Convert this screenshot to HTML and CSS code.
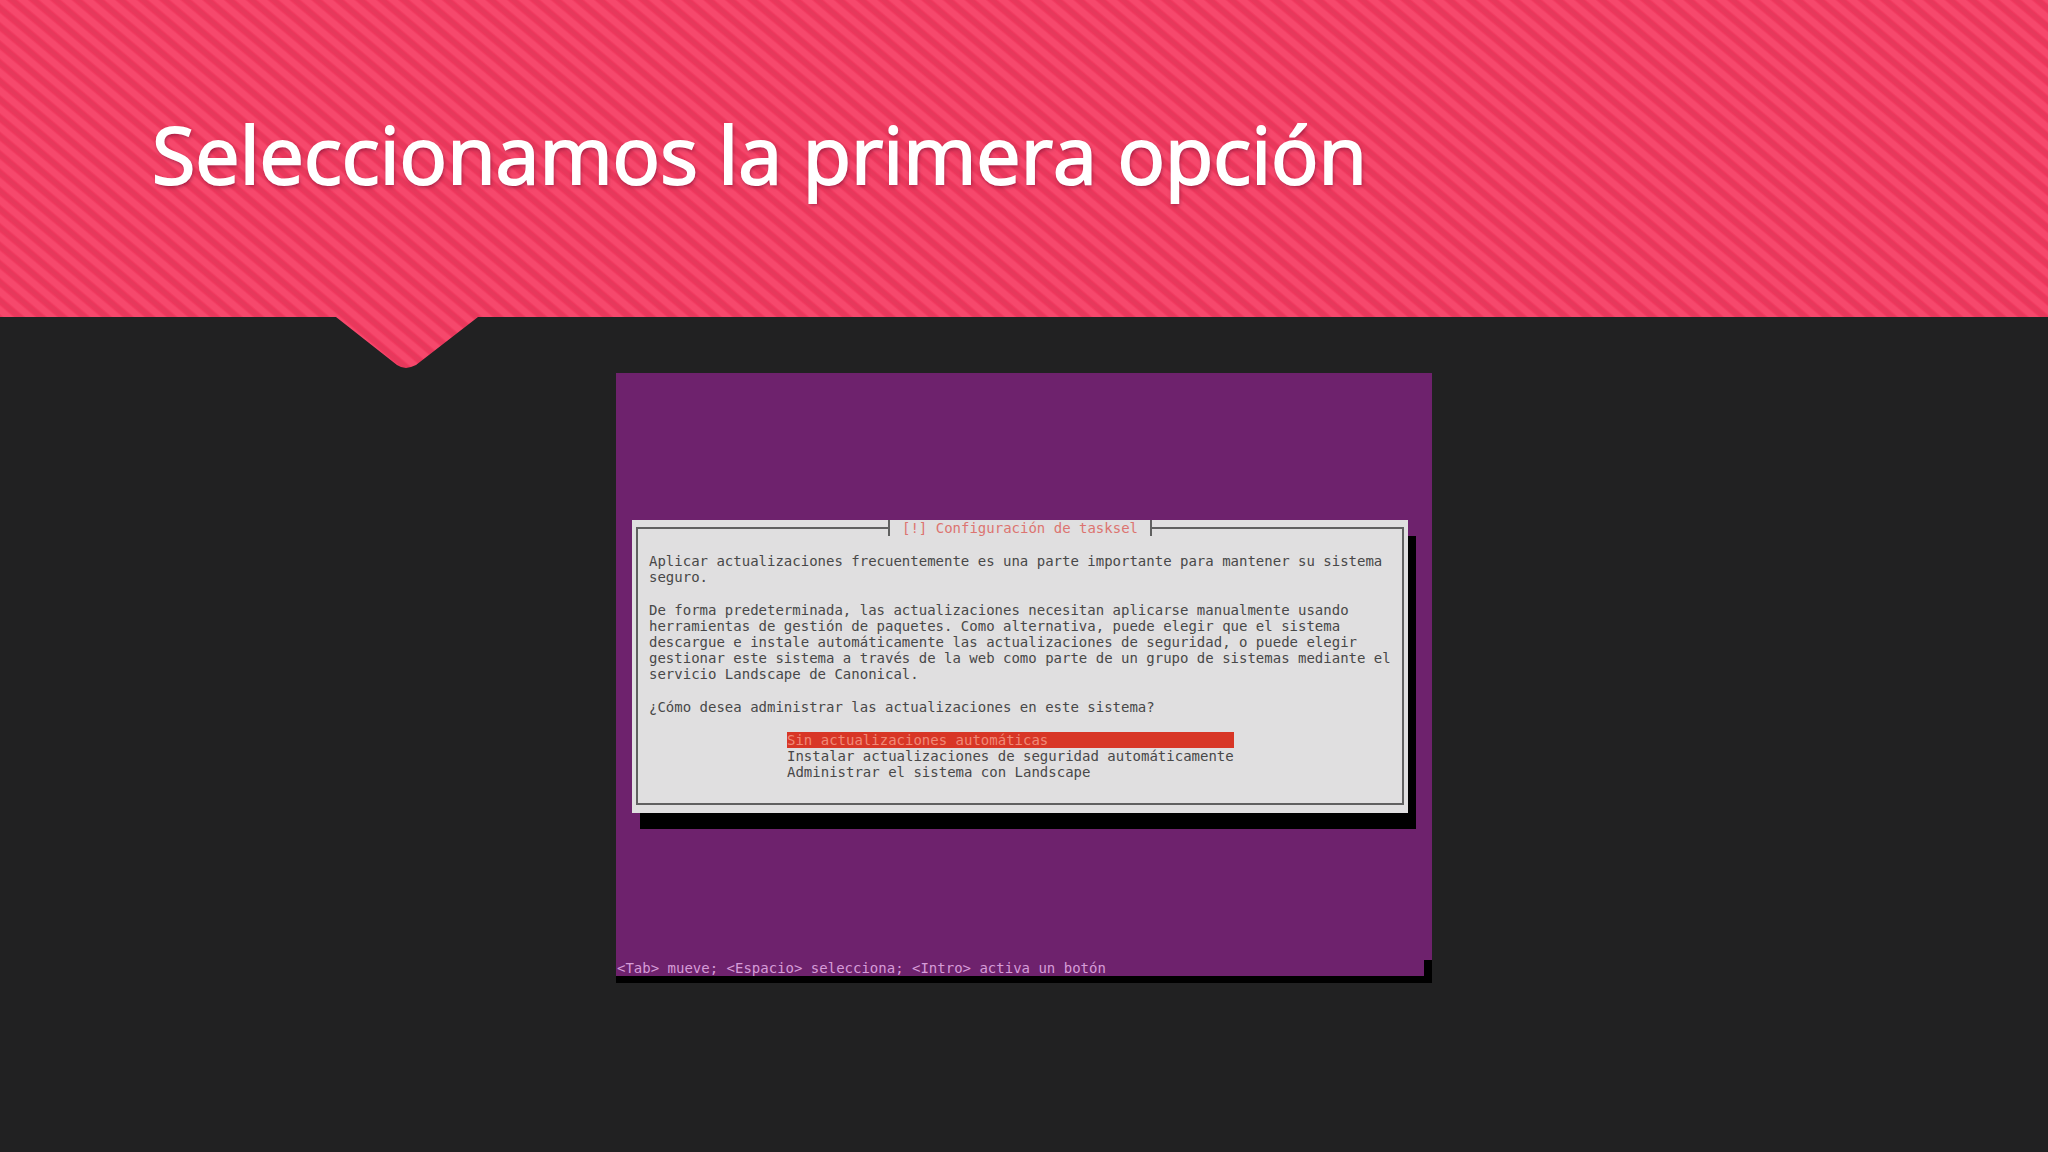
FILE: index.html
```html
<!DOCTYPE html>
<html lang="es">
<head>
  <title>Seleccionamos la primera opción</title>
  <meta charset="utf-8">
  <meta name="viewport" content="width=device-width, initial-scale=1">
  <link rel="stylesheet" href="styles.css">
</head>
<body>
  <header class="header">
    <h1 class="header__title">Seleccionamos la primera opción</h1>
  </header>

  <main class="main">
    <section class="console">
      <div class="console__screen">
        <form class="dialog">
          <fieldset class="dialog__frame">
            <legend class="dialog__title">[!] Configuración de tasksel</legend>

            <p class="dialog__text">Aplicar actualizaciones frecuentemente es una parte importante para mantener su sistema<br>seguro.</p>
            <p class="dialog__text">De forma predeterminada, las actualizaciones necesitan aplicarse manualmente usando<br>herramientas de gestión de paquetes. Como alternativa, puede elegir que el sistema<br>descargue e instale automáticamente las actualizaciones de seguridad, o puede elegir<br>gestionar este sistema a través de la web como parte de un grupo de sistemas mediante el<br>servicio Landscape de Canonical.</p>
            <p class="dialog__text">¿Cómo desea administrar las actualizaciones en este sistema?</p>

            <div class="options">
              <button class="options__item options__item--active" type="button">Sin actualizaciones automáticas</button>
              <button class="options__item" type="button">Instalar actualizaciones de seguridad automáticamente</button>
              <button class="options__item" type="button">Administrar el sistema con Landscape</button>
            </div>
          </fieldset>
        </form>
        <p class="console__help">&lt;Tab&gt; mueve; &lt;Espacio&gt; selecciona; &lt;Intro&gt; activa un botón</p>
      </div>
    </section>
  </main>
</body>
</html>
```
FILE: styles.css
```css
*, *::before, *::after {
  margin: 0;
  padding: 0;
  box-sizing: border-box;
}

body {
  min-height: 100vh;
  background-color: #212122;
  font-family: "Open Sans", "Noto Sans", sans-serif;
}

/* Cabecera con rayas y pico inferior */
.header {
  padding: 94px 152px 154px;
  background: repeating-linear-gradient(40deg, #f6486c 0 5px, #ee365c 7px, #e6395c 9px 11px, #ee365c 12px, #f6486c 14px);
  clip-path: polygon(0 0, 100% 0, 100% calc(100% - 51px), 478px calc(100% - 51px), 416px calc(100% - 3px), 411px calc(100% - 1px), 406px 100%, 401px calc(100% - 1px), 397px calc(100% - 3px), 336px calc(100% - 51px), 0 calc(100% - 51px));
}

.header__title {
  color: #ffffff;
  font-size: 79px;
  font-weight: 400;
  line-height: 120px;
  text-shadow: 1px 2px 4px rgba(90, 0, 40, .6);
  -webkit-text-stroke: 2px #ffffff;
}

.main {
  display: flex;
  justify-content: center;
  padding: 5px 16px 64px;
}

.console {
  background-color: #000000;
  padding-bottom: 7px;
  font-family: "DejaVu Sans Mono", "Liberation Mono", monospace;
  font-size: 14px;
  line-height: 16px;
}

.console__screen {
  width: 816px;
  padding: 147px 24px 0 16px;
  background: linear-gradient(#000000, #000000) right bottom / 8px 16px no-repeat #6e226d;
}

/* Diálogo */
.dialog {
  padding: 0 4px 8px;
  background-color: #e0dfe0;
  box-shadow: 8px 16px #000000;
}

.dialog__frame {
  padding: 17px 11px 23px;
  border: 2px solid #606060;
}

.dialog__title {
  margin: 0 auto;
  padding: 0 12px;
  border: solid #606060;
  border-width: 0 2px;
  color: #dc7470;
}

.dialog__text {
  margin-bottom: 17px;
  color: #484848;
  white-space: nowrap;
}

.options {
  display: flex;
  flex-direction: column;
  width: max-content;
  margin-left: 138px;
}

.options__item {
  border: none;
  background: transparent;
  color: #484848;
  font: inherit;
  text-align: start;
}

.options__item--active {
  background-color: #d83626;
  color: #f08a78;
}

.console__help {
  padding-top: 147px;
  margin-left: -15px;
  color: #d69cd8;
}
```
